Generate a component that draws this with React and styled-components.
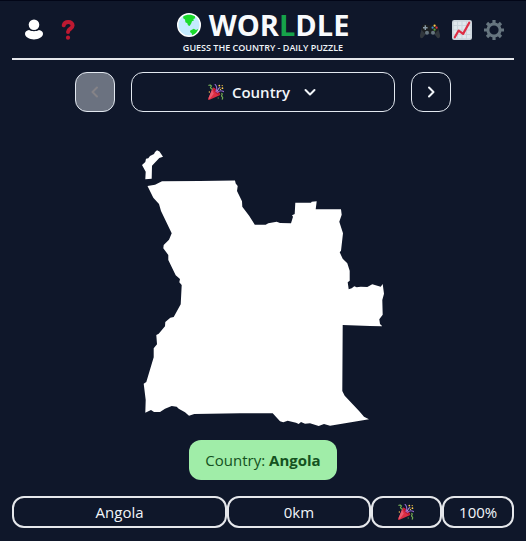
import React from "react";
import styled, { createGlobalStyle } from "styled-components";

const GlobalStyle = createGlobalStyle`
  *, *::before, *::after { box-sizing: border-box; }
  body {
    margin: 0;
    background: #0f172a;
    color: #f1f5f9;
    font-family: "Open Sans", "Noto Sans", sans-serif;
    font-size: 15px;
    line-height: 24px;
  }
  button { font: inherit; color: inherit; cursor: pointer; }
  h1, p { margin: 0; }
  svg { display: block; flex: none; }
`;

const Page = styled.div`
  min-height: 100vh;
  padding: 0 12px 12px;
  border-top: 1px solid #020617;
`;

const Header = styled.header`
  display: grid;
  grid-template-columns: 1fr auto 1fr;
  align-items: center;
  height: 59px;
  border-bottom: 2px solid #e5e7eb;
`;

const HeaderActions = styled.div`
  display: flex;
  justify-content: ${(p) => (p.$end ? "flex-end" : "flex-start")};
  gap: ${(p) => (p.$end ? 8 : 10)}px;
  padding: 0 ${(p) => (p.$end ? 8 : 10)}px;
`;

const IconButton = styled.button`
  display: grid;
  place-items: center;
  width: 24px;
  height: 24px;
  padding: 0;
  border: 0;
  background: none;
`;

const Brand = styled.div`
  display: flex;
  flex-direction: column;
  align-items: center;
  padding-top: 3px;
`;

const Title = styled.h1`
  display: flex;
  align-items: center;
  gap: 8px;
  font-size: 29px;
  font-weight: 700;
  line-height: 34px;
  color: #f8fafc;
`;

const Accent = styled.span`
  display: inline-block;
  color: #16a34a;
`;

const Tagline = styled.p`
  font-size: 9px;
  font-weight: 600;
  line-height: 12px;
`;

const ModeNav = styled.nav`
  display: flex;
  gap: 16px;
  width: 75%;
  margin: 12px auto 0;
`;

const NavButton = styled.button`
  display: flex;
  align-items: center;
  justify-content: center;
  gap: 8px;
  flex: ${(p) => (p.$wide ? "1" : "none")};
  width: 40px;
  height: 40px;
  padding: 0;
  border: 1px solid #e2e8f0;
  border-radius: 12px;
  background: transparent;
  font-weight: 600;
  &:disabled {
    background: #6b7280;
    color: #858387;
    cursor: default;
  }
`;

const ModeName = styled.span`
  margin-right: 4px;
`;

const MapArea = styled.main`
  display: flex;
  flex-direction: column;
  align-items: center;
  gap: 12px;
  padding-top: 36px;
`;

const Answer = styled.p`
  padding: 8px 16px;
  border-radius: 12px;
  background: #a0eda8;
  color: #145220;
`;

const Guesses = styled.div`
  display: grid;
  grid-template-columns: 3fr 2fr 1fr 1fr;
  margin-top: 16px;
`;

const GuessCell = styled.div`
  display: flex;
  align-items: center;
  justify-content: center;
  height: 32px;
  border: 2px solid #e5e7eb;
  border-radius: 12px;
`;

const Chevron = ({ d }) => (
  <svg width="16" height="16" viewBox="0 0 16 16" fill="none" stroke="currentColor" strokeWidth="2" strokeLinecap="round" strokeLinejoin="round" aria-hidden="true">
    <path d={d} />
  </svg>
);

const UserIcon = () => (
  <svg width="20" height="22" viewBox="0 0 20 22" fill="#fff" aria-hidden="true">
    <circle cx="10" cy="5.700" r="5.300" />
    <path d="M5 11.100C7.500 12.700 12.500 12.700 15 11.100C17.200 11.500 19 12.800 19 14.800C19 18 14.500 20.500 10 20.500C5.500 20.500 1 18 1 14.800C1 12.800 2.800 11.500 5 11.100Z" />
  </svg>
);

const QuestionIcon = () => (
  <svg width="20" height="20" viewBox="0 0 20 20" aria-hidden="true">
    <path d="M5.700 5.300C6.200 3 8.200 2 10.300 2C12.900 2 14.600 3.500 14.600 5.600C14.600 9 10 8.600 10 12" fill="none" stroke="#be1931" strokeWidth="4" strokeLinecap="round" />
    <circle cx="10" cy="17.700" r="2.100" fill="#be1931" />
  </svg>
);

const GlobeIcon = () => (
  <svg width="24" height="24" viewBox="0 0 24 24" aria-hidden="true">
    <circle cx="12" cy="12" r="11.300" fill="#c4ebff" stroke="#fff" strokeWidth="1.400" />
    <path d="M6.200 3.400C9 1.300 15 1 17.900 3.300L18.200 5.200L16.300 6L16.900 7.500L15 8.300L14.200 10.500L12.600 13L11 12.300L10.300 10.200L8.400 9.200L8 6.500L6.200 5.300Z" fill="#1adb2b" />
    <path d="M13.300 17.500L16.800 15.700L19 16.900L21.300 16C20.400 19 18 21.400 15.200 22.300L14.600 20.200L13 19Z" fill="#1adb2b" />
  </svg>
);

const GamepadIcon = () => (
  <svg width="20" height="20" viewBox="0 0 20 20" aria-hidden="true">
    <path d="M2 7.500L0 15C-.300 17.800 1 18.500 2.500 18L6 13.700H14L17.500 18C19 18.500 20.300 17.800 20 15L18 7.500Z" fill="#31373d" />
    <path d="M2.200 5.900C3.600 3.700 6.800 3.800 8 5.400H12C13.200 3.800 16.400 3.700 17.800 5.900L18.300 10L15 13.500H5L1.700 10Z" fill="#1b1e21" />
    <path d="M5.300 5.300V10M3 7.700H7.600" stroke="#8799a6" strokeWidth="1.400" />
    <circle cx="7" cy="12.700" r="2" fill="#66757f" />
    <circle cx="13" cy="12.700" r="2" fill="#66757f" />
    <circle cx="14.600" cy="5.700" r="1.100" fill="#ffcc4d" />
    <circle cx="12.600" cy="7.700" r="1.100" fill="#3b88c3" />
    <circle cx="16.600" cy="7.700" r="1.100" fill="#dd2e44" />
    <circle cx="14.600" cy="9.700" r="1.100" fill="#50a038" />
  </svg>
);

const ChartIcon = () => (
  <svg width="20" height="20" viewBox="0 0 36 36" aria-hidden="true">
    <rect width="36" height="36" rx="4" fill="#ccd6dd" />
    <path d="M3 3H9V9H3ZM11 3H17V9H11ZM19 3H25V9H19ZM27 3H33V9H27ZM3 11H9V17H3ZM11 11H17V17H11ZM19 11H25V17H19ZM27 11H33V17H27ZM3 19H9V25H3ZM11 19H17V25H11ZM19 19H25V25H19ZM27 19H33V25H27ZM3 27H9V33H3ZM11 27H17V33H11ZM19 27H25V33H19ZM27 27H33V33H27Z" fill="#e1e8ed" />
    <path d="M5 31L12 19L20 25L31 5" fill="none" stroke="#dd2e44" strokeWidth="4" strokeLinecap="round" strokeLinejoin="round" />
  </svg>
);

const GearIcon = () => (
  <svg width="20" height="20" viewBox="0 0 20 20" aria-hidden="true">
    <path d="M10 0V4.500M10 15.500V20M0 10H4.500M15.500 10H20M3 3L6 6M14 14L17 17M3 17L6 14M14 6L17 3" stroke="#66757f" strokeWidth="3.200" />
    <circle cx="10" cy="10" r="6.100" fill="none" stroke="#66757f" strokeWidth="3" />
  </svg>
);

const PartyIcon = ({ size = 16 }) => (
  <svg width={size} height={size} viewBox="0 0 36 36" role="img" aria-label="Celebration">
    <path d="M11 8L.600 32.500C-.500 35 1 36.500 3.500 35.400L27.500 25C30 22 14 6 11 8Z" fill="#dd2e44" />
    <path d="M9 13L1 32L4 34L13 22Z" fill="#ea596e" />
    <path d="M12 10C15 8 28 20 26 24C23 27 9 14 12 10Z" fill="#be1931" />
    <path d="M18 17C21 10 20 5 16 1M21 19C26 14 30 14 35 17" fill="none" stroke="#9266cc" strokeWidth="2.600" strokeLinecap="round" />
    <path d="M2 3C7 1 9 5 6 7C4 10 9 9 9 12" fill="none" stroke="#77b255" strokeWidth="2.600" strokeLinecap="round" />
    <path d="M31 21C34 24 29 25 31 28C34 30 34 31 32 34" fill="none" stroke="#77b255" strokeWidth="2.600" strokeLinecap="round" />
    <path d="M20 16C23 14 23 9 27 8" fill="none" stroke="#aa8dd8" strokeWidth="2.400" strokeLinecap="round" />
    <g fill="#ffcc4d">
      <circle cx="25.500" cy="3.500" r="2" />
      <circle cx="32.500" cy="9.500" r="2" />
      <circle cx="28" cy="12" r="1.500" />
      <circle cx="32" cy="3.500" r="1.500" />
      <circle cx="3" cy="18" r="1.500" />
    </g>
    <circle cx="23" cy="31.500" r="1.500" fill="#5c913b" />
  </svg>
);

const CountryShape = () => (
  <svg width="244" height="280" viewBox="141 148 244 280" fill="#fff" role="img" aria-label="Outline of the country">
    <path d="M157 150.300L159.500 151.500L163 156.700L159.300 158L152 165.700L151.700 178.700L145.300 179.300L145.700 171.700L142 165L145.300 162L146 158.700L148.300 158.300L150 156L154 154L155 152Z" />
    <path d="M147.500 186L155 184.700L162 181.300L200 181L235 180.500L235.700 183.500L237.700 186L237 191L242 201.300L242.300 206.700L249.300 216L254.800 224.700H265.700L268.300 223.300L276.700 221.700L280 223L291 223.300L293 216.700L292 215.300L294.700 214L295.300 202.700H311L311.700 201.700L316.700 201.300L315.700 209.300H341L341.700 214.700L339.300 221.700L343 233.300L341 250.700L339.700 252.300L342.700 258.700L347.300 263.300L349.700 270.700V280.700L347.700 282.300L348.700 289.300L351.700 288.300L354.300 286.300L356.700 287.300L360.700 286.700L367.300 287L372.300 284.300L380.700 286.700L382.700 284L384 293.700L382.300 300L382.700 314.700L379.300 319.300L380 324L382.300 326.300L370 326L342.700 325L342.300 391L344.700 395.700L359.300 411.300L364 416.700L369 419.300L330 425.700L324 424L318.700 426L310 423.300L305 423.700L301 422L298.700 424L296 422.700L287.700 420.700L283.300 422.300L280 421.300L272.700 413.300H240L194.300 414L189 415.700L185 412.300L178.700 408.700L176.700 406.700L171.700 406L165 408.700L160 412H154L151 410L145.300 412.700L145.700 400L143.700 383.700L146.300 382L153.700 357.300V348.300L157 344.300L156.300 335L158.700 333.700L165 326.300L165.300 322L170.300 317.700L173.700 317L180.700 304.300L181.700 285L179.300 282.300L180 279L175.700 275.300L168.300 260V255L163.300 248.300L163.700 245L169 239.700L171.700 233.300L161 211L159 204L153.300 197.700Z" />
  </svg>
);

export default function App() {
  return (
    <>
      <GlobalStyle />
      <Page>
        <Header>
          <HeaderActions>
            <IconButton aria-label="Profile"><UserIcon /></IconButton>
            <IconButton aria-label="How to play"><QuestionIcon /></IconButton>
          </HeaderActions>
          <Brand>
            <Title>
              <GlobeIcon />
              <span>WOR<Accent>L</Accent>DLE</span>
            </Title>
            <Tagline>GUESS THE COUNTRY - DAILY PUZZLE</Tagline>
          </Brand>
          <HeaderActions $end>
            <IconButton aria-label="Other games"><GamepadIcon /></IconButton>
            <IconButton aria-label="Statistics"><ChartIcon /></IconButton>
            <IconButton aria-label="Settings"><GearIcon /></IconButton>
          </HeaderActions>
        </Header>
        <ModeNav aria-label="Rounds">
          <NavButton disabled aria-label="Previous round"><Chevron d="M10 3.500L5.500 8L10 12.500" /></NavButton>
          <NavButton $wide aria-haspopup="menu">
            <PartyIcon />
            <ModeName>Country</ModeName>
            <Chevron d="M3.500 6L8 10.500L12.500 6" />
          </NavButton>
          <NavButton aria-label="Next round"><Chevron d="M6 3.500L10.500 8L6 12.500" /></NavButton>
        </ModeNav>
        <MapArea>
          <CountryShape />
          <Answer>Country: <strong>Angola</strong></Answer>
        </MapArea>
        <Guesses>
          <GuessCell>Angola</GuessCell>
          <GuessCell>0km</GuessCell>
          <GuessCell><PartyIcon /></GuessCell>
          <GuessCell>100%</GuessCell>
        </Guesses>
      </Page>
    </>
  );
}
